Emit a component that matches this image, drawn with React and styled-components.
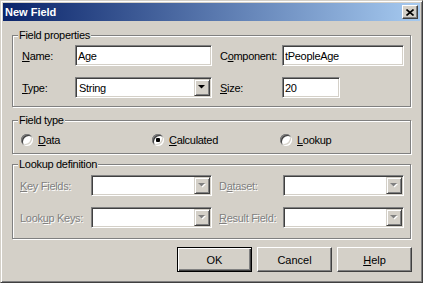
import styled, {createGlobalStyle} from "styled-components";

const GlobalStyle = createGlobalStyle`
  html, body {
    margin: 0;
    padding: 0;
    background: #d4d0c8;
  }

  body {
    font-family: "Liberation Sans", Arial, sans-serif;
    font-size: 11px;
    letter-spacing: -0.3px;
    color: #000;
  }
`;

const Window = styled.div`
  box-sizing: border-box;
  width: 423px;
  height: 283px;
  display: flex;
  flex-direction: column;
  padding: 2px;
  background: #d4d0c8;
  border: 1px solid;
  border-color: #d4d0c8 #404040 #404040 #d4d0c8;
  box-shadow: inset 1px 1px #fff, inset -1px -1px #808080;
`;

const TitleBar = styled.div`
  height: 18px;
  flex: none;
  display: flex;
  align-items: center;
  justify-content: space-between;
  padding: 0 2px;
  background: linear-gradient(to right, #0a246a, #a6caf0);
`;

const Title = styled.span`
  color: #fff;
  font-weight: bold;
  letter-spacing: 0;
`;

const CloseButton = styled.button`
  box-sizing: border-box;
  width: 16px;
  height: 14px;
  padding: 0;
  display: flex;
  align-items: center;
  justify-content: center;
  background: #d4d0c8;
  border: 1px solid;
  border-color: #fff #404040 #404040 #fff;
  box-shadow: inset -1px -1px #808080;
`;

const Body = styled.div`
  flex: 1;
  display: flex;
  flex-direction: column;
  padding: 8px 9px 8px;
`;

const Group = styled.fieldset`
  margin: ${(p) => p.$top || 0}px 0 0;
  padding: 0;
  min-width: 0;
  border: 1px solid #808080;
  box-shadow: 1px 1px #fff, inset 1px 1px #fff;
`;

const Caption = styled.legend`
  margin-left: 5px;
  padding: 0 1px;
  line-height: 13px;
  background: #d4d0c8;
`;

const Grid = styled.div`
  display: grid;
  grid-template-columns: ${(p) => p.$cols};
  row-gap: 11px;
  align-items: center;
  padding: ${(p) => p.$pad};
`;

const Label = styled.span`
  padding-left: ${(p) => p.$indent || 0}px;
  white-space: nowrap;
  color: ${(p) => (p.$disabled ? "#808080" : "#000")};
  text-shadow: ${(p) => (p.$disabled ? "1px 1px #fff" : "none")};
`;

const Field = styled.input`
  box-sizing: border-box;
  width: ${(p) => p.$width || 0}px;
  height: 21px;
  margin: 0;
  padding: 0 2px;
  font: inherit;
  letter-spacing: inherit;
  color: #000;
  background: #fff;
  border: 1px solid;
  border-color: #808080 #fff #fff #808080;
  box-shadow: inset 1px 1px #404040, inset -1px -1px #d4d0c8;
  outline: none;
`;

const Combo = styled.div`
  box-sizing: border-box;
  width: ${(p) => p.$width}px;
  height: 21px;
  display: flex;
  align-items: center;
  padding: 1px;
  background: #fff;
  border: 1px solid;
  border-color: #808080 #fff #fff #808080;
  box-shadow: inset 1px 1px #404040, inset -1px -1px #d4d0c8;
`;

const ComboText = styled.span`
  flex: 1;
  padding-left: 2px;
`;

const DropButton = styled.span`
  box-sizing: border-box;
  width: 16px;
  height: 17px;
  display: flex;
  align-items: center;
  justify-content: center;
  background: #d4d0c8;
  border: 1px solid;
  border-color: #d4d0c8 #404040 #404040 #d4d0c8;
  box-shadow: inset 1px 1px #fff, inset -1px -1px #808080;
`;

const RadioRow = styled.div`
  display: grid;
  grid-template-columns: 131px 128px auto;
  height: 21px;
  align-items: center;
  padding: 2px 0 3px 8px;
`;

const RadioItem = styled.label`
  display: flex;
  align-items: center;
  gap: 5px;
`;

const RadioDot = styled.span`
  position: relative;
  width: 12px;
  height: 12px;
  border-radius: 50%;
  background: #fff;
  box-shadow: inset 1px 1px #808080, inset -1px -1px #fff,
    inset 2px 2px #404040, inset -2px -2px #d4d0c8;

  &::after {
    content: "";
    display: ${(p) => (p.$checked ? "block" : "none")};
    position: absolute;
    left: 4px;
    top: 4px;
    width: 4px;
    height: 4px;
    border-radius: 1px;
    background: #000;
  }
`;

const ButtonRow = styled.div`
  display: flex;
  justify-content: flex-end;
  gap: 5px;
  margin-top: 8px;
  margin-right: -1px;
`;

const PushButton = styled.button`
  box-sizing: border-box;
  width: 75px;
  height: 25px;
  padding: 0;
  font: inherit;
  letter-spacing: 0;
  color: #000;
  background: #d4d0c8;
  border: 1px solid;
  border-color: ${(p) =>
    p.$default ? "#000" : "#fff #404040 #404040 #fff"};
  box-shadow: ${(p) =>
    p.$default
      ? "inset 1px 1px #fff, inset -1px -1px #404040, inset -2px -2px #808080"
      : "inset -1px -1px #808080"};
`;

function Arrow({disabled}) {
  return (
    <svg width="8" height="5" viewBox="0 0 8 5">
      {disabled && <polygon points="1,1 8,1 4.5,4.5" fill="#fff" />}
      <polygon points="0,0 7,0 3.5,3.5" fill={disabled ? "#808080" : "#000"} />
    </svg>
  );
}

function ComboBox({width, value, disabled}) {
  return (
    <Combo $width={width}>
      <ComboText>{value}</ComboText>
      <DropButton>
        <Arrow disabled={disabled} />
      </DropButton>
    </Combo>
  );
}

function Radio({checked, children}) {
  return (
    <RadioItem>
      <RadioDot $checked={checked} />
      <span>{children}</span>
    </RadioItem>
  );
}

export default function App() {
  return (
    <>
      <GlobalStyle />
      <Window>
        <TitleBar>
          <Title>New Field</Title>
          <CloseButton>
            <svg width="8" height="7" viewBox="0 0 8 7">
              <path d="M0.5 0.5 L7.5 6.5 M7.5 0.5 L0.5 6.5" stroke="#000" strokeWidth="1.6" />
            </svg>
          </CloseButton>
        </TitleBar>

        <Body>
          <Group>
            <Caption>Field properties</Caption>
            <Grid $cols="53px 137px 70px 122px" $pad="3px 0 8px 9px">
              <Label><u>N</u>ame:</Label>
              <Field $width={137} defaultValue="Age" readOnly />
              <Label $indent={8}>C<u>o</u>mponent:</Label>
              <Field $width={122} defaultValue="tPeopleAge" readOnly />
              <Label><u>T</u>ype:</Label>
              <ComboBox width={137} value="String" />
              <Label $indent={8}><u>S</u>ize:</Label>
              <Field $width={58} defaultValue="20" readOnly />
            </Grid>
          </Group>

          <Group $top={7}>
            <Caption>Field type</Caption>
            <RadioRow>
              <Radio><u>D</u>ata</Radio>
              <Radio checked><u>C</u>alculated</Radio>
              <Radio><u>L</u>ookup</Radio>
            </RadioRow>
          </Group>

          <Group $top={4}>
            <Caption>Lookup definition</Caption>
            <Grid $cols="71px 121px 71px 121px" $pad="4px 0 10px 7px">
              <Label $disabled><u>K</u>ey Fields:</Label>
              <ComboBox width={121} disabled />
              <Label $disabled $indent={7}>D<u>a</u>taset:</Label>
              <ComboBox width={121} disabled />
              <Label $disabled>Look<u>u</u>p Keys:</Label>
              <ComboBox width={121} disabled />
              <Label $disabled $indent={7}><u>R</u>esult Field:</Label>
              <ComboBox width={121} disabled />
            </Grid>
          </Group>

          <ButtonRow>
            <PushButton $default>OK</PushButton>
            <PushButton>Cancel</PushButton>
            <PushButton><u>H</u>elp</PushButton>
          </ButtonRow>
        </Body>
      </Window>
    </>
  );
}
